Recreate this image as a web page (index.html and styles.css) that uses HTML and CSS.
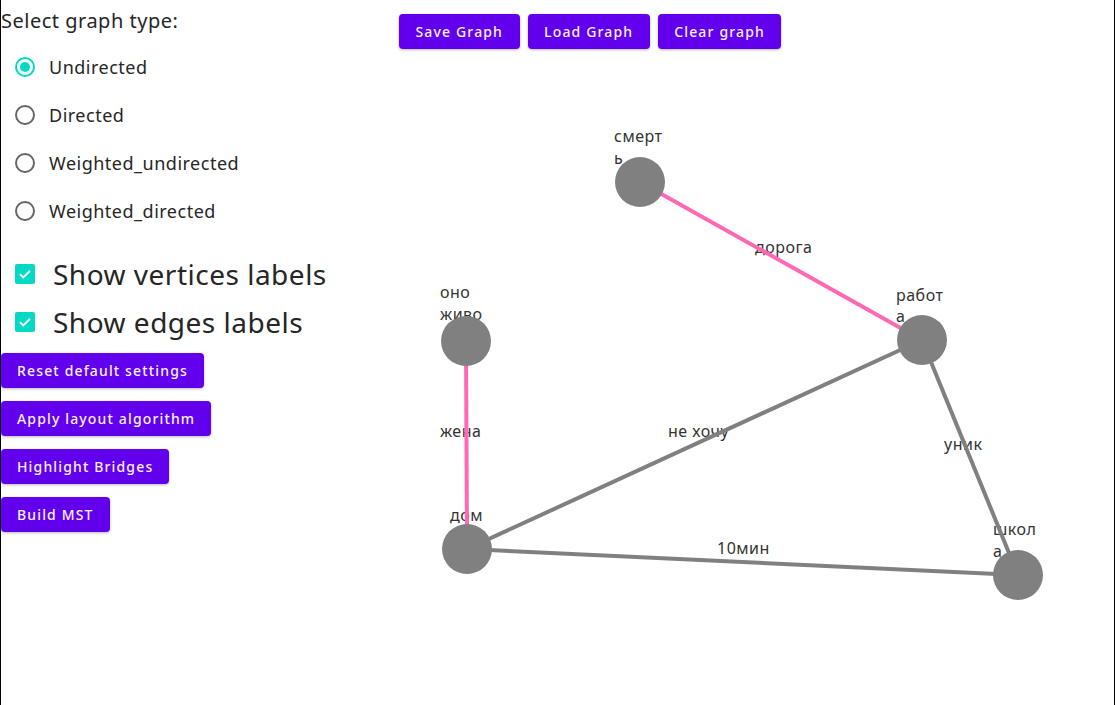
FILE: index.html
```html
<!DOCTYPE html>
<html lang="en">
<head>
<meta charset="utf-8">
<title>Graph editor</title>
<link rel="stylesheet" href="styles.css">
</head>
<body>
<div class="app">
  <aside class="panel">
    <div class="title">Select graph type:</div>
    <div class="radios">
      <div class="radio-row"><span class="radio selected"><span class="dot"></span></span><span class="opt">Undirected</span></div>
      <div class="radio-row"><span class="radio"></span><span class="opt">Directed</span></div>
      <div class="radio-row"><span class="radio"></span><span class="opt">Weighted_undirected</span></div>
      <div class="radio-row"><span class="radio"></span><span class="opt">Weighted_directed</span></div>
    </div>
    <div class="checks">
      <div class="check-row">
        <span class="checkbox"><svg viewBox="0 0 20 20" width="20" height="20"><path d="M5 10.2 L8.4 13.4 L15 6.8" fill="none" stroke="#fff" stroke-width="2"/></svg></span>
        <span class="check-label">Show vertices labels</span>
      </div>
      <div class="check-row">
        <span class="checkbox"><svg viewBox="0 0 20 20" width="20" height="20"><path d="M5 10.2 L8.4 13.4 L15 6.8" fill="none" stroke="#fff" stroke-width="2"/></svg></span>
        <span class="check-label">Show edges labels</span>
      </div>
    </div>
    <div class="actions">
      <button class="btn">Reset default settings</button>
      <button class="btn">Apply layout algorithm</button>
      <button class="btn">Highlight Bridges</button>
      <button class="btn">Build MST</button>
    </div>
  </aside>
  <main class="workspace">
    <div class="toolbar">
      <button class="btn">Save Graph</button>
      <button class="btn">Load Graph</button>
      <button class="btn">Clear graph</button>
    </div>
    <svg class="graph" viewBox="399 60 715 645" width="715" height="645">
      <g class="vlabel">
        <text x="614" y="142">смерт</text>
        <text x="614" y="164">ь</text>
        <text x="440" y="298">оно</text>
        <text x="440" y="320">живо</text>
        <text x="896" y="301">работ</text>
        <text x="896" y="322">а</text>
        <text x="450" y="521">дом</text>
        <text x="993" y="535">школ</text>
        <text x="993" y="557">а</text>
      </g>
      <g class="elabel">
        <text x="755" y="253">дорога</text>
        <text x="440" y="437">жена</text>
        <text x="668" y="437">не хочу</text>
        <text x="944" y="450">уник</text>
        <text x="717" y="554">10мин</text>
      </g>
      <g class="edges">
        <line class="pink" x1="640" y1="182" x2="922" y2="340"/>
        <line class="pink" x1="466" y1="341" x2="467" y2="549"/>
        <line class="grey" x1="467" y1="549" x2="922" y2="340"/>
        <line class="grey" x1="922" y1="340" x2="1018" y2="575"/>
        <line class="grey" x1="467" y1="549" x2="1018" y2="575"/>
      </g>
      <g class="nodes">
        <circle cx="640" cy="182" r="25"/>
        <circle cx="466" cy="341" r="25"/>
        <circle cx="922" cy="340" r="25"/>
        <circle cx="467" cy="549" r="25"/>
        <circle cx="1018" cy="575" r="25"/>
      </g>
    </svg>
  </main>
</div>
</body>
</html>
```
FILE: styles.css
```css
html, body {
  margin: 0;
  padding: 0;
  background: #fff;
}
body {
  font-family: "Noto Sans", "Open Sans", sans-serif;
  color: #262626;
}
.app {
  display: flex;
  height: 705px;
  width: 1115px;
  box-sizing: border-box;
  border-left: 1px solid #000;
  border-right: 1px solid #000;
  overflow: hidden;
}
.panel {
  width: 398px;
  flex: none;
  display: flex;
  flex-direction: column;
}
.title {
  font-size: 20px;
  letter-spacing: 0.5px;
  line-height: 28px;
  padding-top: 7px;
}
.radios {
  margin-top: 8px;
  display: flex;
  flex-direction: column;
}
.radio-row {
  height: 48px;
  display: flex;
  align-items: center;
  padding-left: 14px;
  gap: 14px;
}
.radio {
  width: 20px;
  height: 20px;
  box-sizing: border-box;
  border: 2px solid #666;
  border-radius: 50%;
  display: flex;
  align-items: center;
  justify-content: center;
}
.radio.selected {
  border-color: #03dac5;
}
.dot {
  width: 10px;
  height: 10px;
  border-radius: 50%;
  background: #03dac5;
}
.opt {
  font-size: 18px;
  letter-spacing: 0.5px;
}
.checks {
  margin-top: 15px;
  display: flex;
  flex-direction: column;
}
.check-row {
  height: 48px;
  display: flex;
  align-items: center;
  padding-left: 14px;
  gap: 18px;
}
.checkbox {
  width: 20px;
  height: 20px;
  background: #03dac5;
  border-radius: 2px;
  display: block;
}
.checkbox svg {
  display: block;
}
.check-label {
  font-size: 28px;
  letter-spacing: 0.5px;
}
.actions {
  margin-top: 7px;
  display: flex;
  flex-direction: column;
  align-items: flex-start;
  gap: 13px;
}
.btn {
  height: 35px;
  padding: 0 16px;
  border: none;
  border-radius: 4px;
  background: #6200ee;
  color: #f5f2fd;
  font-family: "Noto Sans", "Open Sans", sans-serif;
  font-size: 14px;
  font-weight: 500;
  letter-spacing: 1.15px;
  box-shadow: 0 1px 3px rgba(0, 0, 0, 0.28);
  cursor: pointer;
}
.workspace {
  flex: 1;
  display: flex;
  flex-direction: column;
}
.toolbar {
  display: flex;
  gap: 8px;
  padding-top: 14px;
}
.toolbar .btn {
  padding: 0 16.5px;
}
.graph {
  margin-top: 11px;
  display: block;
  overflow: visible;
}
.graph text {
  font-family: "Noto Sans", "Open Sans", sans-serif;
  font-size: 16px;
  letter-spacing: 0.5px;
  fill: #333;
}
.edges line {
  stroke-width: 4;
}
.edges .pink {
  stroke: #ff69b4;
}
.edges .grey {
  stroke: #808080;
}
.nodes circle {
  fill: #808080;
}
```
